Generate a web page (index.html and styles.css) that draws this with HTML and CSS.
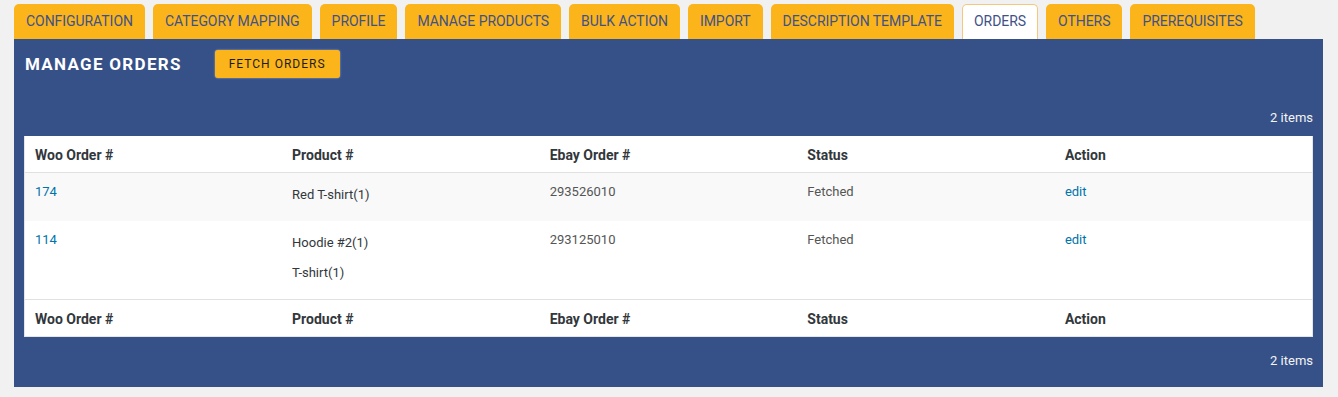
FILE: index.html
```html
<!DOCTYPE html>
<html lang="en">
  <head>
    <meta charset="UTF-8" />
    <meta name="viewport" content="width=device-width, initial-scale=1.0" />
    <title>Manage Orders</title>
    <link rel="stylesheet" href="styles.css">
  </head>
  <body>
    <div class="wrap">
      <ul class="tabs">
        <li class="tab">CONFIGURATION</li>
        <li class="tab">CATEGORY MAPPING</li>
        <li class="tab">PROFILE</li>
        <li class="tab">MANAGE PRODUCTS</li>
        <li class="tab">BULK ACTION</li>
        <li class="tab">IMPORT</li>
        <li class="tab">DESCRIPTION TEMPLATE</li>
        <li class="tab active">ORDERS</li>
        <li class="tab">OTHERS</li>
        <li class="tab">PREREQUISITES</li>
      </ul>

      <div class="panel">
        <div class="panel-head">
          <h2>MANAGE ORDERS</h2>
          <button class="fetch-btn">FETCH ORDERS</button>
        </div>

        <div class="count top">2 items</div>

        <table class="orders">
          <thead>
            <tr>
              <th>Woo Order #</th>
              <th>Product #</th>
              <th>Ebay Order #</th>
              <th>Status</th>
              <th>Action</th>
            </tr>
          </thead>
          <tbody>
            <tr class="alt">
              <td><a href="#">174</a></td>
              <td>
                <p class="product">Red T-shirt(1)</p>
              </td>
              <td class="muted">293526010</td>
              <td class="muted">Fetched</td>
              <td><a href="#">edit</a></td>
            </tr>
            <tr>
              <td><a href="#">114</a></td>
              <td>
                <p class="product">Hoodie #2(1)</p>
                <p class="product">T-shirt(1)</p>
              </td>
              <td class="muted">293125010</td>
              <td class="muted">Fetched</td>
              <td><a href="#">edit</a></td>
            </tr>
          </tbody>
          <tfoot>
            <tr>
              <th>Woo Order #</th>
              <th>Product #</th>
              <th>Ebay Order #</th>
              <th>Status</th>
              <th>Action</th>
            </tr>
          </tfoot>
        </table>

        <div class="count bottom">2 items</div>
      </div>
    </div>
  </body>
</html>
```

FILE: styles.css
```css
body {
  margin: 0;
  background: #f1f1f1;
  font-family: Roboto, "Open Sans", sans-serif;
  color: #32373c;
}

.wrap {
  padding: 4px 15px 0 14px;
}

.tabs {
  display: flex;
  gap: 8px;
  list-style: none;
  margin: 0;
  padding: 0;
}

.tab {
  background: #fbb41a;
  color: #3f5288;
  font-size: 14px;
  line-height: 35px;
  padding: 0 12px;
  letter-spacing: -0.05px;
  border-radius: 5px 5px 0 0;
}

.tab.active {
  background: #fff;
  border: 1px solid #f5c77c;
  border-bottom: none;
  line-height: 32px;
  padding: 0 11px 2px;
}

.panel {
  background: #365088;
  padding: 11px 10px 18px;
}

.panel-head {
  display: flex;
  align-items: center;
  gap: 33px;
  padding-left: 1px;
}

.panel-head h2 {
  margin: 0;
  color: #fff;
  font-size: 17px;
  font-weight: bold;
  letter-spacing: 1.3px;
}

.fetch-btn {
  background: #fbb41a;
  color: #1d1d1d;
  border: none;
  border-radius: 3px;
  height: 28px;
  padding: 0 14px;
  font-family: inherit;
  font-size: 12px;
  letter-spacing: 1px;
  box-shadow: 0 0 2px rgba(255, 255, 255, 0.6);
  cursor: pointer;
}

.count {
  color: #f4f4f4;
  font-size: 13px;
  line-height: 16px;
  text-align: right;
}

.count.top {
  margin-top: 32px;
  margin-bottom: 10px;
}

.count.bottom {
  margin-top: 16px;
}

.orders {
  width: 100%;
  table-layout: fixed;
  border-collapse: collapse;
  background: #fff;
  border: 1px solid #e5e5e5;
  border-top: none;
}

.orders th {
  text-align: left;
  font-size: 14px;
  font-weight: bold;
  color: #32373c;
  line-height: 20px;
  padding: 9px 10px 7px;
}

.orders thead th {
  border-bottom: 1px solid #e1e1e1;
}

.orders tfoot th {
  border-top: 1px solid #e1e1e1;
}

.orders td {
  vertical-align: top;
  font-size: 13px;
  line-height: 20px;
  padding: 9px 10px 6px;
}

.orders tr.alt td {
  background: #f9f9f9;
}

.orders a {
  color: #0073aa;
  text-decoration: none;
}

.orders .muted {
  color: #555;
}

.product {
  margin: 3px 0 10px;
  color: #32373c;
}
```
